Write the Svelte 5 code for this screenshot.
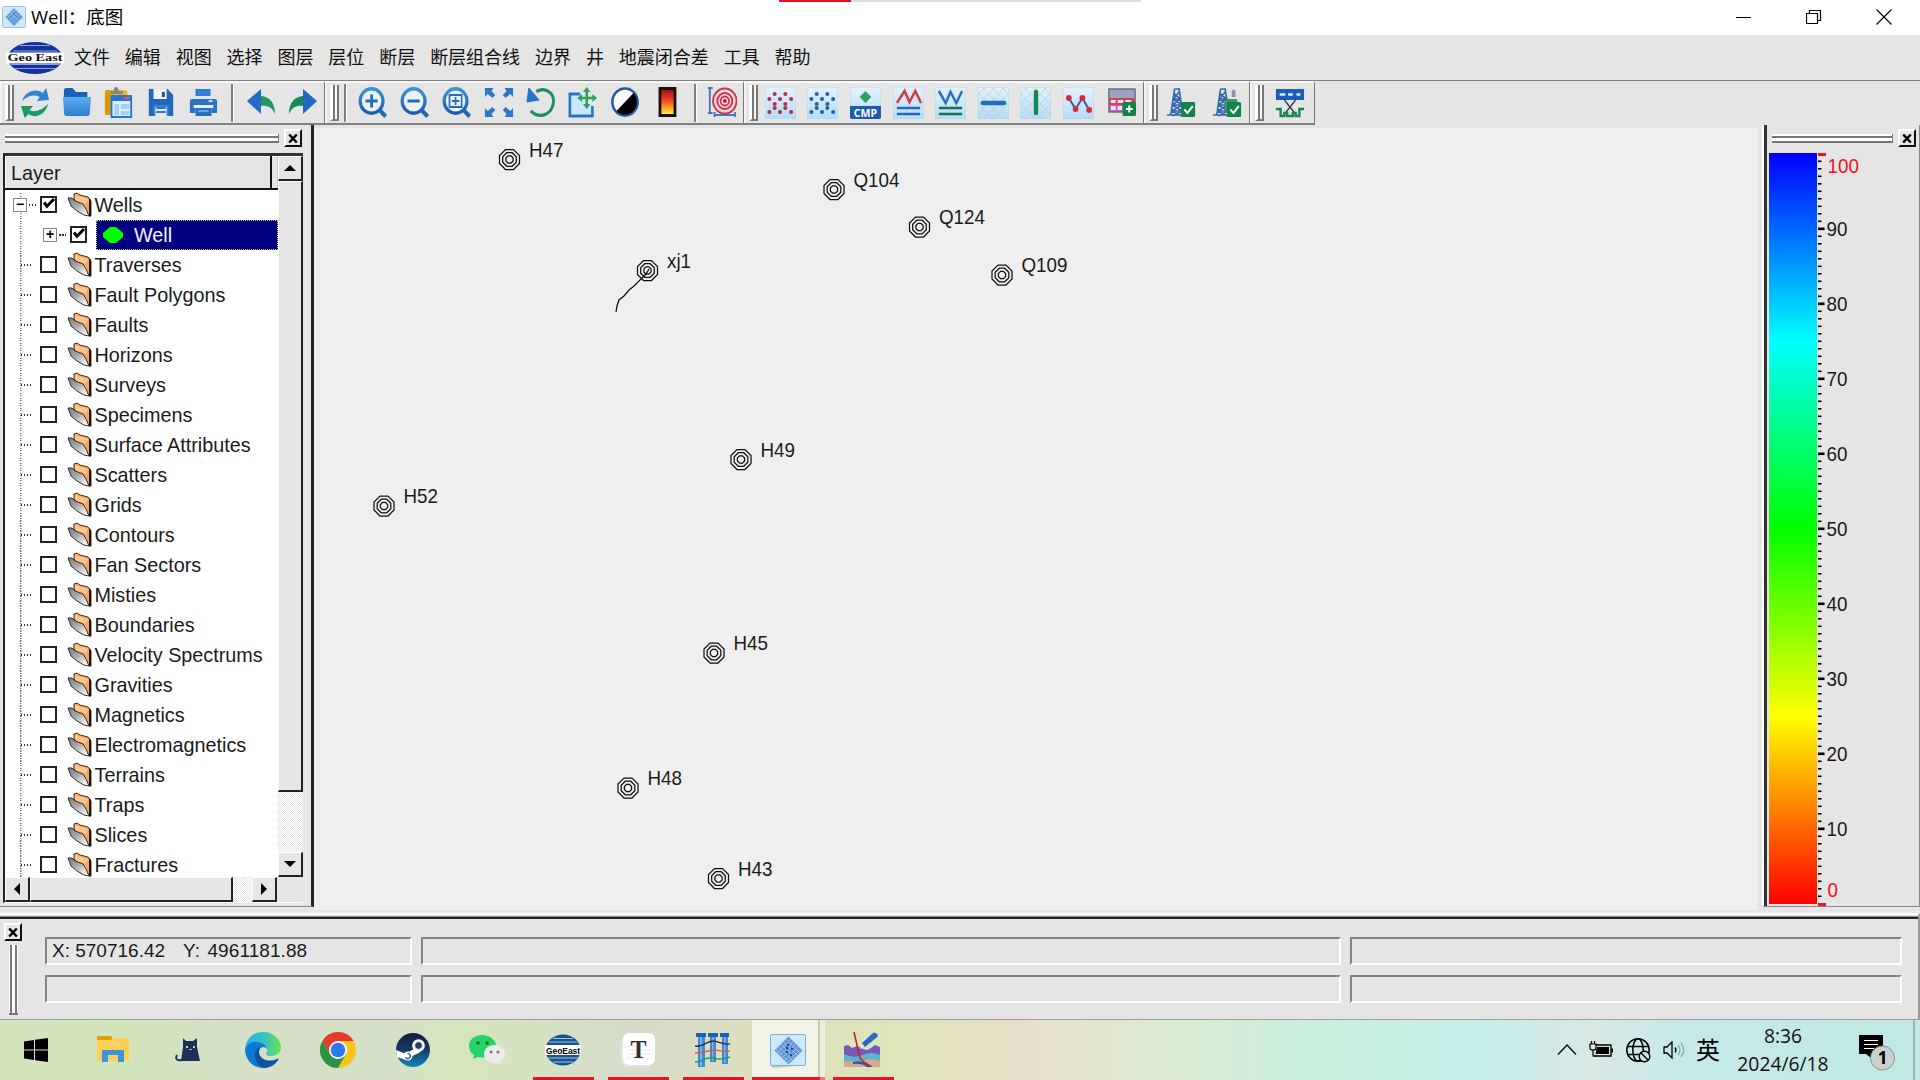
<script>
  const menus = ['文件', '编辑', '视图', '选择', '图层', '层位', '断层', '断层组合线', '边界', '井', '地震闭合差', '工具', '帮助'];

  const layers = [
    'Traverses', 'Fault Polygons', 'Faults', 'Horizons', 'Surveys', 'Specimens', 'Surface Attributes',
    'Scatters', 'Grids', 'Contours', 'Fan Sectors', 'Misties', 'Boundaries', 'Velocity Spectrums',
    'Gravities', 'Magnetics', 'Electromagnetics', 'Terrains', 'Traps', 'Slices', 'Fractures'
  ];

  // map coordinates of every well head
  const wells = [
    { name: 'H47', x: 509.5, y: 159.5 },
    { name: 'Q104', x: 834, y: 189.5 },
    { name: 'Q124', x: 919.5, y: 227 },
    { name: 'Q109', x: 1002, y: 275 },
    { name: 'xj1', x: 647.5, y: 270.5 },
    { name: 'H49', x: 741, y: 459.5 },
    { name: 'H52', x: 384, y: 506 },
    { name: 'H45', x: 714, y: 653 },
    { name: 'H48', x: 628, y: 788 },
    { name: 'H43', x: 718.5, y: 878.5 }
  ];

  const ring = (r) => {
    const k = r * 0.4;
    return [[-k, -r], [k, -r], [r, -k], [r, k], [k, r], [-k, r], [-r, k], [-r, -k]].map((p) => p.join(',')).join(' ');
  };

  const ticks = Array.from({ length: 101 }, (_, i) => i);
  const labels = [90, 80, 70, 60, 50, 40, 30, 20, 10];

  const magnifier = '<circle cx="14.5" cy="14" r="12.2" fill="#ecf1f6" stroke="url(#blue)" stroke-width="3.4"/><path d="M23.500 23.500l6 6" stroke="#2266b0" stroke-width="4.200"/>';
  const tile = '<rect x="0" y="0" width="32" height="32" rx="2" fill="url(#tile)" stroke="#b5d3e8" stroke-width=".8"/>';
  const hatch = '<path d="M0 8l8-8M0 18L18 0M0 28L28 0M6 32L32 6M16 32l16-16M24 0l8 8M14 0l18 18M4 0l28 28M0 6l26 26M0 16l16 16" stroke="#bccfda" stroke-width=".8" fill="none"/>';
  const dotField = (c) => {
    const pts = [[10, 7], [21, 7], [4.5, 12], [15.5, 12], [27, 12], [10, 17], [21, 17], [4.5, 25], [15.5, 25], [27, 25], [10, 21], [21, 21]];
    return pts.map(([x, y]) => `<circle cx="${x}" cy="${y}" r="2.1" fill="${c}"/>`).join('');
  };
  const tower = '<path d="M8 2h5l4 26M8 2L4 28M6.500 12h9M6 18h10M5 24h11M7 6l7 6-8 6 10 6-10 5M13 5l-6 7 9 6-11 6 11 5M0 28h18" stroke="#3567ae" stroke-width="1.700" fill="none"/>';
  const tick = '<rect x="15" y="15" width="15" height="15" rx="1.500" fill="#118548"/><path d="M18.500 22.500l3.300 3.500 5.700-7" stroke="#fff" stroke-width="2" fill="none"/>';

  const art = {
    refresh: '<path d="M2 14C6 4 17 1 24 6l4-5 3 12-13 1 3-4C15 7 8 9 2 14z" fill="#2f83cf"/><path d="M30 17C27 28 16 32 9 27l-4 4-4-12 13 0-4 4c6 3 13 0 20-6z" fill="#1b9b60"/>',
    folder: '<path d="M2 4q0-3 3-3h6l4 4h12v5H2z" fill="#1c60b8"/><path d="M1 10h30l-1.500 17q-.5 2-2.500 2H5q-2.500 0-2.700-2z" fill="url(#sky)"/>',
    paste: '<rect x="1" y="3" width="24" height="25" rx="2" fill="#eab526"/><path d="M1 5v22q0 1 2 1h4V3H3Q1 3 1 5z" fill="#d99a05"/><path d="M7 7V4h3q1-4 3-4t3 4h4v3z" fill="#8d8577"/><rect x="8" y="9" width="21" height="21" fill="#d9efff" stroke="#2a74ce" stroke-width="2"/><path d="M8 9h21v5H8z" fill="#2a74ce"/><path d="M21 11h6" stroke="#e55" stroke-width="2"/><path d="M11 17h5v11h-5zM18 17h9v5h-9zM18 24h9v4h-9z" fill="#9fd0f6"/>',
    save: '<path d="M3 2h20l6 6v21H3z" fill="#2368bc"/><path d="M8 2h14v10H8z" fill="#edf2f7"/><path d="M17 5h3v5h-3z" fill="#1c4d91"/><path d="M8 18h16v11H8z" fill="#3186d8"/><path d="M10 20h12v9H10z" fill="#e5eaef"/><path d="M11 20h10v2H11zM11 24h10v2H11z" fill="#2d78c6"/>',
    print: '<path d="M8 2h16v7H8z" fill="#2f7fd2"/><path d="M4 12h25q2 0 2 2v12h-6v-5H8v5H2V14q0-2 2-2z" fill="#2b74c5"/><path d="M8 21h17v8H8z" fill="#2770c1"/><path d="M6 18h21v3H6z" fill="#e8eef4"/><path d="M11 23h11v2H11z" fill="#5fa8e5"/><path d="M22 14h4" stroke="#fff" stroke-width="1.500"/>',
    undo: '<path d="M15 9c9 0 16 6 16 18-4-8-9-9-16-8z" fill="#229663"/><path d="M1 14L16 2v25z" fill="#236cc4"/>',
    redo: '<path d="M17 9C8 9 1 15 1 27c4-8 9-9 16-8z" fill="#168a57"/><path d="M31 14L16 2v25z" fill="#2269c0"/>',
    zoomin: magnifier + '<path d="M8 14h13M14.500 7.500v13" stroke="#226cb4" stroke-width="3"/>',
    zoomout: magnifier + '<path d="M8 14h13" stroke="#226cb4" stroke-width="3"/>',
    zoomfit: magnifier + '<path d="M8 8h13v12H8zM10.500 14h8M14.500 10v8" stroke="#226cb4" stroke-width="1.800" fill="none"/>',
    expand: '<path d="M1 1h9L8 4l4 4-3 3-5-4-3 3zM31 1h-9l2 3-4 4 3 3 5-4 3 3zM1 30h9l-2-3 4-4-3-3-5 4-3-3zM31 30h-9l2-3-4-4 3-3 5 4 3-3z" fill="#2b78c3"/>',
    rotate: '<path d="M11 4.500C22-1 31 7 29 17S15 33 5 24" fill="none" stroke="#228b70" stroke-width="3.200"/><path d="M3 1l11 12L1 15z" fill="#2475c8" stroke="#2475c8"/>',
    exportmap: '<path d="M2 7h15v10h10v12H2z" fill="#c9e8ff"/><path d="M13 7H2v22h24V19" fill="none" stroke="#2875bf" stroke-width="2.800"/><path d="M20 3v17M12 11h17" stroke="#2aa15d" stroke-width="2.600"/><path d="M20 0l4 5h-8zM20 22l4-5h-8zM10 11l5-4v8zM31 11l-5-4v8z" fill="#2aa15d"/>',
    contrast: '<circle cx="16" cy="15" r="13.500" fill="#fff" stroke="#20599f" stroke-width="2.600"/><path d="M25 6A12.700 12.700 0 1 1 7 24z" fill="#000"/>',
    heat: '<rect x="7" y="0" width="19" height="30" fill="#171006"/><rect x="10" y="3" width="13" height="24" fill="url(#heat)"/>',
    target: '<circle cx="19" cy="14" r="12.500" fill="#f7d5da" stroke="#ca3345" stroke-width="2"/><circle cx="19" cy="14" r="8" fill="none" stroke="#ca3345" stroke-width="2"/><circle cx="19" cy="14" r="4.500" fill="#f9e7e9" stroke="#ca3345" stroke-width="1.800"/><circle cx="19" cy="14" r="2" fill="#b8162c"/><path d="M3 1v25M1 1h5M1 26h5M8 28h22M8 25v5M30 25v5" stroke="#4577b4" stroke-width="2" fill="none"/>',
    reddots: tile + dotField('#b72f40'),
    bluedots: tile + dotField('#2560a4'),
    cmp: tile + '<path d="M0 19h32v11q0 2-2 2H2q-2 0-2-2z" fill="#1b5cae"/><path d="M16 4l6 6-6 6-6-6z" fill="#28a364"/><text x="16" y="30" text-anchor="middle" font-family="Open Sans, sans-serif" font-size="11" font-weight="700" textLength="24" lengthAdjust="spacingAndGlyphs" fill="#fff">CMP</text>',
    peaks: tile + '<path d="M4 16l8-12 5 11 6-11 6 12" fill="none" stroke="#d43c45" stroke-width="2.600"/><path d="M4 21h24M4 27h24" stroke="#246bb4" stroke-width="2.400"/>',
    valleys: tile + '<path d="M4 4l7 12 5-11 6 11 6-12" fill="none" stroke="#3071b6" stroke-width="2.600"/><path d="M4 21h24M4 27h24" stroke="#18744d" stroke-width="2.400"/>',
    inline: tile + hatch + '<path d="M5 16h22" stroke="#246cbb" stroke-width="4.500" stroke-linecap="round"/>',
    crossline: tile + hatch + '<path d="M16.500 5v21" stroke="#13894d" stroke-width="4.500" stroke-linecap="round"/>',
    polyline: tile + '<path d="M6 11l7 11 7-11 7 12" fill="none" stroke="#3d60a0" stroke-width="2.200"/><circle cx="6" cy="11" r="3" fill="#d82a3c"/><circle cx="13" cy="22" r="3" fill="#d82a3c"/><circle cx="20" cy="11" r="3" fill="#d82a3c"/><circle cx="27" cy="23" r="3" fill="#d82a3c"/>',
    table: '<path d="M3 2h27v9H3z" fill="#9aa5c2"/><path d="M3 11h27v7H3z" fill="#e03a4c"/><path d="M3 18h27v7H3z" fill="#c45bd6"/><path d="M5 13h5v3H5zM12 13h6v3h-6zM20 13h6v3h-6zM5 19h5v4H5zM12 19h5v4h-5z" fill="#f7e9ee"/><path d="M3 2h27v23H3z" stroke="#6b6f7f" stroke-width="1.500" fill="none"/><rect x="17" y="15" width="14" height="14" rx="1.500" fill="#118548"/><path d="M20.500 22h7M24 18.500v7" stroke="#fff" stroke-width="2"/>',
    derrick: tower + tick,
    derricks: tower + '<path d="M20 4q2-3 4 0v6h-4z" fill="#8294ad"/><rect x="13" y="12" width="13" height="14" rx="1.500" fill="#399466"/>' + tick,
    fault: '<path d="M1 2h30v11H1z" fill="#1b5fbe"/><path d="M5 7.500h6M14 7.500h5M23 7.500h4" stroke="#dcecff" stroke-width="2.500"/><path d="M10 13l11 13M22 13L11 26" stroke="#35414d" stroke-width="1.500"/><path d="M1 22h5v7h4v-3h3v3h6v-3h3v3h4v-7h5" stroke="#1b8650" stroke-width="2.600" fill="none"/>'
  };

  const seq = (names) => names.split(' ');
  const file = seq('refresh folder paste save print');
  const history = seq('undo redo');
  const view = seq('zoomin zoomout zoomfit expand rotate exportmap contrast heat');
  const draw = seq('reddots bluedots cmp peaks valleys inline crossline polyline table');
</script>

{#snippet icon(name)}
  <span class="tool"><svg width="30" height="32" viewBox="0 0 32 32" preserveAspectRatio="none">{@html art[name]}</svg></span>
{/snippet}

{#snippet closeBox()}
  <span class="close"><svg width="10" height="9" viewBox="0 0 10 9"><path d="M1.200.5l7.600 8M8.800.5l-7.600 8" stroke="#000" stroke-width="2.400" /></svg></span>
{/snippet}

{#snippet folderIcon()}
  <svg class="folder" width="26" height="26" viewBox="0 0 26 26">
    <path d="M7 7V2l3-1 3 2 8 2 3 4v15l-2-1z" fill="#fba55a" stroke="#40301e" stroke-width="1" />
    <path d="M8 3l4 1 9 3-2 5L8 8z" fill="#ffc68b" />
    <path d="M1 6h4l3 3 8 3 3 5 3 7-5-1-7-4-6-5z" fill="url(#silver)" stroke="#333" stroke-width="1" />
    <path d="M22 6l2 2v16.500h-2z" fill="#1a1713" />
  </svg>
{/snippet}

{#snippet check(on)}
  <span class="check">{#if on}<svg width="14" height="14" viewBox="0 0 14 14"><path d="M2 5.500l3 3.800L12 2" fill="none" stroke="#000" stroke-width="3" /></svg>{/if}</span>
{/snippet}

<div class="screen">
  <svg class="defs" width="0" height="0">
    <defs>
      <linearGradient id="blue" x2="0" y2="1"><stop stop-color="#3b93d6" /><stop offset="1" stop-color="#1c5cac" /></linearGradient>
      <linearGradient id="sky" x2="0" y2="1"><stop stop-color="#5aadf0" /><stop offset="1" stop-color="#2f7dd2" /></linearGradient>
      <linearGradient id="tile" x2="0" y2="1"><stop stop-color="#e4f2fd" /><stop offset="1" stop-color="#b4dcfa" /></linearGradient>
      <linearGradient id="heat" x2="0" y2="1"><stop stop-color="#a10d1b" /><stop offset=".45" stop-color="#f04a22" /><stop offset="1" stop-color="#fff02a" /></linearGradient>
      <linearGradient id="silver" x2=".8" y2="1"><stop stop-color="#777" /><stop offset=".5" stop-color="#aeaeae" /><stop offset="1" stop-color="#fff" /></linearGradient>
      <linearGradient id="night" x2="0" y2="1"><stop stop-color="#151a38" /><stop offset=".5" stop-color="#183a66" /><stop offset="1" stop-color="#1289bd" /></linearGradient>
      <linearGradient id="edgeTop"><stop stop-color="#2bb0ee" /><stop offset=".5" stop-color="#31c2c5" /><stop offset="1" stop-color="#6ce24e" /></linearGradient>
    </defs>
  </svg>

  <header class="title">
    <svg width="24" height="23" viewBox="0 0 24 23">
      <rect x=".5" y=".5" width="23" height="21" rx="1" fill="#cfe8fb" stroke="#9cc3e2" />
      <path d="M12 2l9 9-9 9-9-9z" fill="#7fb0e4" />
      <path d="M9 5l9 9M6.500 8l9 9M11 3.500l9 9M4.500 10l9 9M15 5l-9 9M17.500 8l-9 9M19.500 10l-9 9" stroke="#3a70c0" stroke-width=".9" stroke-dasharray="2 1" />
    </svg>
    <span class="name">Well：底图</span>
    <span class="progress"></span>
    <div class="controls">
      <svg width="16" height="16" viewBox="0 0 16 16"><path d="M0 8.500h15" stroke="#000" /></svg>
      <svg width="16" height="16" viewBox="0 0 16 16"><path d="M.5 4.500h11v10H.5zM3.500 4V1.500h11v10H12" fill="none" stroke="#000" stroke-width="1.200" /></svg>
      <svg width="16" height="16" viewBox="0 0 16 16"><path d="M.5.5l15 15M15.500.5l-15 15" stroke="#000" stroke-width="1.200" /></svg>
    </div>
  </header>

  <nav class="menu">
    <svg class="logo" width="58" height="34" viewBox="0 0 58 34">
      <ellipse cx="29" cy="17" rx="27.500" ry="16" fill="#13329b" />
      <path d="M14 4.500h30M7 10h44M5 23.500h48M9 27.500h40" stroke="#8ea3dc" stroke-width="1.200" />
      <rect x="0" y="11.500" width="58" height="11" fill="#fff" />
      <text x="29" y="20" text-anchor="middle" font-family="Liberation Serif, serif" font-weight="700" font-size="9.500" textLength="55" lengthAdjust="spacingAndGlyphs" fill="#111">Geo East</text>
    </svg>
    {#each menus as m}<span>{m}</span>{/each}
  </nav>

  <div class="toolbars">
    <div class="bar g1">
      <i class="grip"></i>
      {#each file as n}{@render icon(n)}{/each}
      <i class="sep"></i>
      {#each history as n}{@render icon(n)}{/each}
    </div>
    <div class="bar g2">
      <i class="grip"></i><i class="sep first"></i>
      {#each view as n}{@render icon(n)}{/each}
      <i class="sep last"></i>
      {@render icon('target')}
    </div>
    <div class="bar g3">
      <i class="grip"></i>
      {#each draw as n}{@render icon(n)}{/each}
    </div>
    <div class="bar g4">
      <i class="grip"></i>
      {@render icon('derrick')}{@render icon('derricks')}
    </div>
    <div class="bar g5">
      <i class="grip"></i>
      {@render icon('fault')}
    </div>
  </div>

  <main>
    <aside class="left">
      <div class="dockhead"><i class="rails"></i>{@render closeBox()}</div>
      <div class="tree">
        <div class="upper">
          <div class="list">
            <div class="colhead"><span>Layer</span><b></b></div>
            <div class="rows">
              <div class="row top">
                <span class="branch"><i class="box">−</i></span>
                {@render check(true)}{@render folderIcon()}<span>Wells</span>
              </div>
              <div class="row child">
                <span class="branch"><i class="box plus">+</i></span>
                {@render check(true)}
                <div class="selected"><svg width="20" height="18" viewBox="0 0 20 18"><path d="M7 1h6l7 6v4l-7 6H7l-7-6V7z" fill="#0f0" /></svg><span>Well</span></div>
              </div>
              {#each layers as l}
                <div class="row">
                  <span class="branch"><i class="dots"></i></span>
                  {@render check(false)}{@render folderIcon()}<span>{l}</span>
                </div>
              {/each}
            </div>
          </div>
          <div class="vscroll">
            <div class="btn"><svg width="12" height="8" viewBox="0 0 12 8"><path d="M0 7h12L6 1z" /></svg></div>
            <div class="thumb"></div>
            <div class="trough"></div>
            <div class="btn"><svg width="12" height="8" viewBox="0 0 12 8"><path d="M0 1h12L6 7z" /></svg></div>
          </div>
        </div>
        <div class="hscroll">
          <div class="btn"><svg width="8" height="12" viewBox="0 0 8 12"><path d="M7 0v12L1 6z" /></svg></div>
          <div class="thumb"></div>
          <div class="trough"></div>
          <div class="btn"><svg width="8" height="12" viewBox="0 0 8 12"><path d="M1 0v12l6-6z" /></svg></div>
        </div>
      </div>
    </aside>

    <svg class="map" width="1444" height="782" viewBox="314 128 1444 782">
      {#each wells as w}
        <g transform="translate({w.x} {w.y})" fill="none" stroke="#111" stroke-width="1.250">
          <polygon points={ring(10)} /><polygon points={ring(6.8)} /><polygon points={ring(3.600)} />
        </g>
        <text transform="translate({w.x + 19.5} {w.y - 3}) scale(.94 1)">{w.name}</text>
      {/each}
      <path d="M649 269l-3 5-6 6-6 6-5 4-5 6-5 4-2 6-1 6" fill="none" stroke="#111" stroke-width="1.300" />
    </svg>

    <aside class="right">
      <div class="dockhead"><i class="rails"></i>{@render closeBox()}</div>
      <div class="scale">
        <div class="ramp"></div>
        <svg width="90" height="756" viewBox="0 0 90 756">
          {#each ticks as t}
            {#if t > 0 && t < 100}
              <rect x="1" y={t * 7.5 + (t % 10 ? 0 : -0.5)} width={t % 10 ? 3.5 : 6.5} height={t % 10 ? 1.6 : 2.6} />
            {/if}
          {/each}
          <g class="hot">
            <rect x="1" y="0" width="8" height="3" /><rect x="1" y="750" width="8" height="3" />
            <text transform="translate(10.500 19.500) scale(.94 1)">100</text><text transform="translate(10.500 744) scale(.94 1)">0</text>
          </g>
          {#each labels as v}<text transform="translate(9.500 {(100 - v) * 7.5 + 8}) scale(.94 1)">{v}</text>{/each}
        </svg>
      </div>
    </aside>
  </main>

  <section class="status">
    <div class="side">{@render closeBox()}<i class="vrails"></i></div>
    <div class="fields">
      <div><span>X: 570716.42</span><span class="y">Y: 4961181.88</span></div><div></div><div></div>
      <div></div><div></div><div></div>
    </div>
  </section>

  <footer class="taskbar">
    <div class="app"><svg width="24" height="24" viewBox="0 0 24 24"><path d="M0 3.500L10 2v9.500H0zM11 1.800L24 0v11.500H11zM0 12.500h10V22L0 20.500zM11 12.500h13V24l-13-1.800z" /></svg></div>
    <div class="app"><svg width="32" height="28" viewBox="0 0 32 28"><path d="M0 1q0-1 1-1h13l2 3-2 3H0z" fill="#e09e0a" /><path d="M0 4h14l2-2h14q2 0 2 2v19q0 2-2 2H2q-2 0-2-2z" fill="#fdcf5b" /><path d="M5 26V15q0-1 1-1h20q1 0 1 1v11h-6v-7H11v7z" fill="#3b95da" /></svg></div>
    <div class="app"><svg width="26" height="26" viewBox="0 0 26 26"><path d="M8 1l3 3h7l4-3v9l3 14H6l2-14z" fill="#1b3159" /><path d="M7 23c-5 1-7-1-5-5" fill="none" stroke="#1b3159" stroke-width="2" /><circle cx="12" cy="10" r="1" fill="#fff" /><circle cx="19" cy="10" r="1" fill="#fff" /><path d="M14 12.500h3" stroke="#cde" stroke-width=".8" /></svg></div>
    <div class="app"><svg width="36" height="36" viewBox="0 0 36 36">
      <path d="M0 17C1 6 9 0 18 0c11 0 18 8 18 15 0 6-5 9-10 9-3 0-5-1-5-2s2-2 1-5c-1-4-5-6-9-6-6 0-11 2-13 6z" fill="url(#edgeTop)" />
      <path d="M0 17C2 12 7 9 12 10c5 0 9 3 10 7-3-4-8-2-8 4s5 12 12 12c-2 2-5 3-8 3C8 36 0 28 0 17z" fill="#0d7ad3" />
      <path d="M14 15c-6 4-6 16 4 21 7 0 12-3 15-8 1-1 0-2-1-1-8 4-18 0-18-7 0-2 0-4 1-5z" fill="#11519f" /></svg></div>
    <div class="app"><svg width="36" height="36" viewBox="0 0 36 36"><circle cx="18" cy="18" r="18" fill="#fcc31e" /><path d="M2.400 9A18 18 0 0 1 33.600 9H18l-7.800 13.500z" fill="#e33b2e" /><path d="M2.400 9A18 18 0 0 0 18 36l7.800-13.500-15.600 0z" fill="#27944a" /><circle cx="18" cy="18" r="9" fill="#fff" /><circle cx="18" cy="18" r="7.300" fill="#2c78ed" /></svg></div>
    <div class="app"><svg width="34" height="34" viewBox="0 0 34 34"><circle cx="17" cy="17" r="17" fill="url(#night)" /><path d="M0 17l10 4 9-6 4-5 5 4-5 6-9 4q-2 5-7 2l-6-2z" fill="#fff" /><circle cx="22.500" cy="12.500" r="6.300" fill="#fff" /><circle cx="22.500" cy="12.500" r="4" fill="#26436d" stroke="#fff" /><circle cx="12" cy="23" r="4.500" fill="#fff" /><path d="M9.500 24.500q3 3 5-1 0-3-3-3" fill="none" stroke="#1e4b7b" stroke-width="1.200" /></svg></div>
    <div class="app"><svg width="37" height="32" viewBox="0 0 37 32"><path d="M13 1C5 1 0 6 0 12c0 4 2 7 5 9l-1 4 5-2c9 2 18-2 18-11C27 6 21 1 13 1z" fill="#25d366" /><circle cx="9" cy="9" r="1.800" fill="#146b38" /><circle cx="18" cy="9" r="1.800" fill="#146b38" /><path d="M25.500 11C19 11 15 15 15 20s4 9 11 9l6 1-1-3c3-1 5-4 5-7 0-5-4-9-10.500-9z" fill="#ececec" /><circle cx="22" cy="18" r="1.500" fill="#777" /><circle cx="29" cy="18" r="1.500" fill="#777" /></svg></div>
    <div class="app open"><svg width="40" height="32" viewBox="0 0 40 32"><ellipse cx="20" cy="16" rx="17.500" ry="15.500" fill="#175390" /><path d="M10 4.500h20M6 8h28M5 24h30M10 28h20" stroke="#a8c8e4" stroke-width="1" /><rect x="2" y="11" width="36" height="10" fill="#fff" /><text x="20" y="19.500" text-anchor="middle" font-family="Liberation Sans, sans-serif" font-weight="700" font-size="9" textLength="34" lengthAdjust="spacingAndGlyphs" fill="#000">GeoEast</text></svg></div>
    <div class="app open"><svg width="34" height="34" viewBox="0 0 34 34"><rect x="0" y="3" width="31" height="31" rx="6" fill="#e2e5df" /><rect x="2" y="0" width="32" height="32" rx="6" fill="#fff" /><path d="M6 13h24M6 17h24M6 21h24M6 25h24" stroke="#e5e5e5" stroke-width=".8" /><text x="17.500" y="24.500" text-anchor="middle" font-family="Liberation Serif, serif" font-weight="700" font-size="26" textLength="16" lengthAdjust="spacingAndGlyphs" fill="#303030">T</text></svg></div>
    <div class="app open"><svg width="36" height="36" viewBox="0 0 36 36"><path d="M3 2h7v33H3zM15 2h6v28h-6zM27 2h6v30h-6z" fill="#3f8ad8" /><path d="M5 5h2v29H5zM17 5h1.500v24H17zM29 5h1.500v26H29z" fill="#77b3ec" /><path d="M1 1h10v4H1zM13 1h10v4H13zM25 1h9v4h-9z" fill="#1d61b6" /><path d="M0 14c8 2 11-5 18-5 5 0 9 4 17 3" fill="none" stroke="#333" stroke-width="1.400" /><path d="M0 21c10 0 13-3 19-3 5 0 9 2 16 1" fill="none" stroke="#e45b3b" stroke-width="1.400" /><path d="M0 30c8 0 11-6 18-4 5 2 9 1 17-1" fill="none" stroke="#259b5e" stroke-width="1.400" /></svg></div>
    <div class="app open active"><svg width="37" height="35" viewBox="0 0 37 35"><path d="M1 32l35-4v4l-33 3z" fill="#bfc4c4" /><rect x=".5" y="1.500" width="35" height="31" rx="1.500" fill="#cbe8fd" stroke="#7cb0dc" /><path d="M18.500 3.500l14 14-14 14-14-14z" fill="#5f93d3" /><path d="M16 6l14 14M13.500 8.500l14 14M11 11l14 14M8.500 13.500l14 14M6 16l14 14M21 6L7 20M23.500 8.500l-14 14M26 11L12 25M28.500 13.500l-14 14M31 16L17 30" stroke="#bcd7f3" stroke-width=".6" /><path d="M17 11h2v2h-2zM21 15h2v2h-2zM16 18h2v2h-2zM20 21h2v2h-2zM16 14h2v2h-2z" fill="#17498f" /></svg></div>
    <div class="app open"><svg width="37" height="36" viewBox="0 0 37 36"><path d="M0 22h36v13H0z" fill="#d9a981" /><path d="M0 20h36v9q-8-3-16-1T0 29z" fill="#59b4cf" /><path d="M0 14l4-1 4 3 5-2 6 3 4 1 4-2 4-3 5 2v8q-9-4-18 0T0 22z" fill="#7a58b5" /><path d="M9 30q8-2 14 1l6 4h-6q-5-4-14-3z" fill="#1d57b5" /><path d="M10 0l3 13 3 13 9 9" fill="none" stroke="#cc2031" stroke-width="1.600" /><path d="M16 17l2-6L29 1q2-1 4 1t-1 4L21 15z" fill="#2b68c0" /><path d="M16 17l2-6 3 4z" fill="#e0e7ee" /></svg></div>

    <div class="tray">
      <svg width="20" height="12" viewBox="0 0 20 12"><path d="M1 10.500L10 1l9 9.500" fill="none" stroke="#111" stroke-width="1.400" /></svg>
      <svg width="25" height="18" viewBox="0 0 25 18"><path d="M7 4h15v11H5" fill="none" stroke="#000" stroke-width="1.400" /><path d="M8 6h12v7H6.500zM22.500 7.500H24v4h-1.500z" /><path d="M1 3h6v4q0 2-3 2T1 7zM2.500 0v3M5.500 0v3M4 9v6h3" fill="none" stroke="#000" stroke-width="1.200" /></svg>
      <svg width="25" height="25" viewBox="0 0 25 25"><g fill="none" stroke="#000" stroke-width="1.500"><circle cx="12" cy="12" r="11.200" /><ellipse cx="12" cy="12" rx="5.200" ry="11.200" /><path d="M2 8.500h20M2 16.500h12" /></g><circle cx="18.500" cy="18.500" r="5.300" fill="#c5eae8" stroke="#000" stroke-width="1.400" /><path d="M15 15l7 7" stroke="#000" stroke-width="1.400" /></svg>
      <svg width="24" height="18" viewBox="0 0 24 18"><path d="M1 6h3l5-5v16l-5-5H1z" fill="none" stroke="#000" stroke-width="1.300" /><path d="M12 6.500q2 2.500 0 5" fill="none" stroke="#000" stroke-width="1.300" /><path d="M15 4q4 5 0 10M18 2q5.500 7 0 14" fill="none" stroke="#8aa" stroke-width="1.300" /></svg>
      <span class="ime">英</span>
      <div class="clock"><span>8:36</span><span>2024/6/18</span></div>
      <svg class="note" width="38" height="38" viewBox="0 0 38 38"><path d="M1 1h24v19H14v5l-6-5H1z" /><path d="M6 6.500h14M6 10.500h14M6 14.500h10" stroke="#fff" stroke-width="1.200" /><circle cx="24.500" cy="24" r="12" fill="#c9d1cf" stroke="#858f8d" /><text x="24.500" y="30" text-anchor="middle" font-family="Open Sans, sans-serif" font-weight="700" font-size="17">1</text></svg>
      <i class="peek"></i>
    </div>
  </footer>
</div>

<style>
  :global(body) { margin: 0; overflow: hidden; }
  * { box-sizing: border-box; }
  svg { display: block; flex: none; }
  .screen { width: 1920px; height: 1080px; display: flex; flex-direction: column; background: #e5e5e5; color: #1a1a1a; font: 19.8px "Liberation Sans", "Noto Sans CJK SC", sans-serif; position: relative; overflow: hidden; }
  .defs { position: absolute; }

  .title { height: 35px; flex: none; background: #fff; display: flex; align-items: center; padding: 0 28px 1px 2px; color: #000; position: relative; }
  .title .name { margin-left: 5px; font: 18.5px/30px "Open Sans", "Noto Sans CJK SC", sans-serif; flex: 1; }
  .progress { position: absolute; left: 779px; top: 0; width: 362px; height: 2px; background: linear-gradient(90deg, #e81123 72px, #dcdcdc 72px); }
  .controls { display: flex; gap: 54px; }

  .menu { height: 45px; flex: none; display: flex; align-items: center; gap: 14.9px; padding: 0 0 0 6px; font: 18px "Noto Sans CJK SC", sans-serif; color: #111; }
  .menu .logo { margin-right: -5px; }
  .menu span { white-space: nowrap; padding-bottom: 4px; }

  .toolbars { height: 45px; flex: none; display: flex; border-top: 1.5px solid #808080; }
  .bar { display: flex; align-items: center; border-top: 2px solid #f6f6f6; border-right: 1.5px solid #777; border-bottom: 2px solid #808080; box-shadow: inset 2px 0 #f4f4f4; padding-left: 5px; }
  .g1 { width: 325px; }
  .g2 { width: 419px; }
  .g3 { width: 400px; }
  .g4 { width: 106px; }
  .g5 { width: 65px; }
  .grip { width: 9px; height: 36px; flex: none; border-left: 3px solid #fff; border-right: 2px solid #777; border-bottom: 2px solid #777; background: linear-gradient(90deg, #777 2px, #f8f8f8 2px); }
  .g3 .grip, .g4 .grip, .g5 .grip { margin-right: 1px; }
  .tool { width: 42px; display: flex; justify-content: center; flex: none; }
  .g1 .tool { width: 42.1px; }
  .g3 .tool { width: 42.6px; }
  .g3 .tool svg { width: 31px; }
  .g4 .tool { width: 45px; }
  .g4 .tool:last-child { margin-left: 1px; }
  .g5 .tool { width: 50px; }
  .sep { width: 3px; height: 38px; margin: 0 5px 0 7px; flex: none; border-left: 2px solid #808080; border-right: 1px solid #fff; }
  .sep.first { margin: 0 5px 0 5px; }
  .sep.last { margin: 0 4px 0 6px; }

  main { height: 788px; flex: none; display: flex; }
  .left { width: 314px; height: 782px; flex: none; padding: 4px 8px 0 0; border-right: 3px solid #222; display: flex; flex-direction: column; border-bottom: 1px solid #888; }
  .dockhead { display: flex; align-items: center; gap: 5px; padding-left: 5px; height: 18px; flex: none; }
  .left .dockhead { padding-right: 1px; }
  .rails { flex: 1; height: 9px; border-right: 1.5px solid #777; background: linear-gradient(#fff 2px, #777 2px 4px, #fff 4px 7px, #777 7px); }
  .close { width: 18px; height: 18px; flex: none; border: 2px solid; border-color: #fff #111 #111 #fff; display: flex; align-items: center; justify-content: center; background: #e5e5e5; }
  .tree { margin: 6px 0 0 3px; width: 300px; height: 750px; border-left: 2px solid #222; border-top: 3px solid #333; border-bottom: 1px solid #fff; display: flex; flex-direction: column; }
  .upper { height: 721px; display: flex; flex: none; }
  .list { width: 273px; background: #fff; display: flex; flex-direction: column; overflow: hidden; }
  .colhead { height: 34px; flex: none; background: #e5e5e5; display: flex; align-items: center; border-bottom: 2px solid #111; box-shadow: inset 1px 1px #fff; padding-left: 6px; }
  .colhead span { flex: 1; padding-top: 3px; }
  .colhead b { width: 8px; height: 32px; border-left: 2px solid #111; border-right: 1px solid #ccc; }
  .rows { background: repeating-linear-gradient(#777 0 1px, transparent 1px 2.5px) 14.5px 3px / 1.5px 100% no-repeat; overflow: hidden; height: 687px; }
  .row { height: 30px; display: flex; align-items: center; white-space: nowrap; }
  .row > span:last-child { margin-left: 1.5px; }
  .branch { width: 34px; height: 15px; flex: none; padding-left: 8px; margin-right: 1px; display: flex; align-items: center; }
  .row.top .branch::after, .row.child .branch::after, .dots { content: ""; width: 12px; height: 1.5px; margin-left: 8px; background: repeating-linear-gradient(90deg, #333 0 1.5px, transparent 1.5px 3px); }
  .row.top .branch::after, .row.child .branch::after { width: 7px; margin-left: 2px; }
  .box { width: 14px; height: 14px; border: 1.5px solid #888; background: #fff; font: 700 14px/10px "Liberation Sans", sans-serif; text-align: center; color: #000; }
  .child .branch { width: 64px; padding-left: 38px; }
  .check { width: 17px; height: 17px; border: 2px solid #222; flex: none; margin-bottom: 2px; margin-right: 10px; background: #fff; display: flex; align-items: center; justify-content: center; }
  .selected { flex: 1; height: 30px; margin-left: -1px; background: #000080; color: #f5f5f5; outline: 1px dotted #d0d060; outline-offset: -1px; display: flex; align-items: center; padding-left: 7px; gap: 11px; }

  .vscroll { width: 25px; display: flex; flex-direction: column; }
  .btn { width: 25px; height: 25px; flex: none; display: flex; align-items: center; justify-content: center; background: #e5e5e5; border: solid; border-width: 1px 2px 2px 1px; border-color: #fff #222 #222 #fff; }
  .vscroll .thumb { height: 611px; border: solid; border-width: 1px 2px 2px 1px; border-color: #fff #222 #222 #fff; }
  .trough { flex: 1; background: repeating-conic-gradient(#fff 0 25%, #e5e5e5 0 50%) 0 0 / 2px 2px; }
  .hscroll { height: 25px; width: 272px; display: flex; }
  .hscroll .thumb { width: 203px; border: solid; border-width: 1px 2px 2px 1px; border-color: #fff #222 #222 #fff; }

  .map { background: #efefef; margin-top: 3px; }
  .map text, .scale text { font: 20px "Liberation Sans", sans-serif; fill: #1a1a1a; }

  .right { flex: 1; height: 782px; margin-left: 4px; border-left: 2px solid #fff; padding: 4px 3px 0 0; border-bottom: 1px solid #888; border-right: 1.5px solid #888; box-shadow: inset 3px 0 #333; }
  .right .dockhead { padding-left: 8px; }
  .scale { display: flex; margin: 6px 0 0 5px; }
  .ramp { width: 48px; height: 751px; background: linear-gradient(#00f, #0ff 25%, #0f0 50%, #ff0 75%, #f00); }
  .scale .hot text, .scale .hot rect { fill: #f01020; }

  .status { height: 107px; flex: none; display: flex; border-top: 2px solid #fff; border-right: 2px solid #999; border-bottom: 1.5px solid #999; padding-top: 3px; background: linear-gradient(#888 1px, #222 1px 3px, transparent 3px) 0 1px / 100% 4px no-repeat; }
  .side { width: 45px; flex: none; padding: 5px 0 0 4px; }
  .vrails { display: block; width: 9px; height: 70px; margin: 4px 0 0 5px; border-bottom: 2px solid #777; background: linear-gradient(90deg, #fff 1px, #777 1px 3px, #fff 3px 6px, #777 6px 8px, #fff 8px); }
  .fields { display: grid; grid-template-columns: 367px 920px 552px; grid-template-rows: 28px 28px; gap: 10px 9px; padding-top: 19px; }
  .fields div { border: 2px solid; border-color: #858585 #fff #fff #858585; display: flex; align-items: center; gap: 18px; padding-left: 5px; font-size: 19px; }
  .fields .y { word-spacing: 2px; letter-spacing: .08px; }

  .taskbar { height: 60px; flex: none; display: flex; align-items: center; background: linear-gradient(90deg, #d4e4be 0, #d3e6ba 5%, #d5e0c6 13%, #d5e0c8 20%, #d5e6bd 24%, #d5ddc9 33%, #dfdfc0 40%, #dce5ba 46%, #e9dfc8 53%, #ddebd0 60%, #c9efdc 68%, #c5eeea 77%, #d8e8e5 83%, #c4e9e8 88%, #c2e8e6 100%); }
  .app { width: 75px; height: 60px; display: flex; align-items: center; justify-content: center; position: relative; }
  .app:first-child { width: 72px; margin-right: 3px; }
  .open::after { content: ""; position: absolute; bottom: 0; left: 8px; width: 61px; height: 3px; background: #e81123; }
  .active { background: linear-gradient(90deg, transparent 2px, #f2f2e5 2px 68px, #c8cdad 68px 70px, #ecefd9 70px); padding-left: 1px; }
  .active::after { left: 2px; width: 73px; background: linear-gradient(90deg, #e81123 68px, #f07880 68px); }
  .tray { margin-left: auto; display: flex; align-items: center; height: 60px; }
  .tray > svg + svg { margin-left: 12px; }
  .ime { font: 24px "Noto Sans CJK SC", sans-serif; color: #000; margin: 0 0 3px 9px; }
  .clock { width: 100px; margin: 0 1px 0 13px; display: flex; flex-direction: column; text-align: center; font: 19.3px/28px "Open Sans", sans-serif; color: #111; }
  .note { margin: 6px 0 0 24px; }
  .peek { width: 7px; height: 60px; margin-left: 17px; border-left: 2px solid #9bb8b8; }
</style>
